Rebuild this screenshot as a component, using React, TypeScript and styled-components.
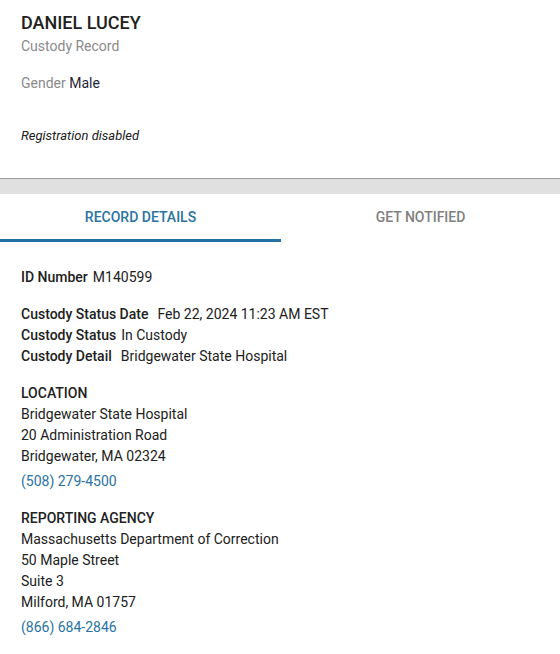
import React from "react";
import styled, { createGlobalStyle } from "styled-components";

const GlobalStyle = createGlobalStyle`
	body {
		margin: 0;
		font-family: Roboto, "Liberation Sans", Arial, sans-serif;
		background: #fff;
		color: #212121;
	}
`;

const Page = styled.div`
	width: 560px;
`;

const Header = styled.header`
	padding: 12px 21px 0 21px;
	height: 179px;
	box-sizing: border-box;
	border-bottom: 1px solid #9e9e9e;
`;

const Name = styled.h1`
	margin: 0;
	font-size: 18px;
	font-weight: 500;
	line-height: 22px;
	color: #212121;
`;

const Subtitle = styled.div`
	font-size: 14px;
	line-height: 20px;
	color: #8a8a8a;
	margin-top: 2px;
`;

const Field = styled.div`
	margin-top: 17px;
	font-size: 14px;
	line-height: 20px;
	color: #8a8a8a;
	span {
		color: #1f1f3a;
	}
`;

const Note = styled.div`
	margin-top: 35px;
	font-size: 13px;
	font-style: italic;
	color: #212121;
`;

const Divider = styled.div`
	height: 15px;
	background: #e0e0e0;
`;

const Tabs = styled.nav`
	display: grid;
	grid-template-columns: 281px 1fr;
	height: 48px;
`;

const Tab = styled.div<{ $active?: boolean }>`
	display: flex;
	align-items: center;
	justify-content: center;
	font-size: 14px;
	font-weight: 500;
	text-transform: uppercase;
	color: ${(p) => (p.$active ? "#2a73a3" : "#7f7f7f")};
	border-bottom: 3px solid ${(p) => (p.$active ? "#2271a0" : "transparent")};
	box-sizing: border-box;
	padding-top: 1px;
`;

const Body = styled.section`
	padding: 25px 21px 0 21px;
	font-size: 14px;
	line-height: 21px;
	color: #212121;
`;

const Group = styled.div`
	margin-bottom: 16px;
`;

const Row = styled.div`
	display: flex;
	gap: 5px;
`;

const Label = styled.span<{ $gap?: number }>`
	font-weight: 500;
	margin-right: ${(p) => p.$gap || 0}px;
`;

const SectionTitle = styled.div`
	font-weight: 500;
	text-transform: uppercase;
`;

const Phone = styled.div`
	color: #2a73a3;
	margin-top: 4px;
`;

export default function App() {
	return (
		<Page>
			<GlobalStyle />
			<Header>
				<Name>DANIEL LUCEY</Name>
				<Subtitle>Custody Record</Subtitle>
				<Field>
					Gender <span>Male</span>
				</Field>
				<Note>Registration disabled</Note>
			</Header>
			<Divider />
			<Tabs>
				<Tab $active>Record Details</Tab>
				<Tab>Get Notified</Tab>
			</Tabs>
			<Body>
				<Group>
					<Row>
						<Label>ID Number</Label>M140599
					</Row>
				</Group>
				<Group>
					<Row>
						<Label $gap={4}>Custody Status Date</Label>Feb 22, 2024 11:23 AM EST
					</Row>
					<Row>
						<Label>Custody Status</Label>In Custody
					</Row>
					<Row>
						<Label $gap={4}>Custody Detail</Label>Bridgewater State Hospital
					</Row>
				</Group>
				<Group>
					<SectionTitle>Location</SectionTitle>
					<div>Bridgewater State Hospital</div>
					<div>20 Administration Road</div>
					<div>Bridgewater, MA 02324</div>
					<Phone>(508) 279-4500</Phone>
				</Group>
				<Group>
					<SectionTitle>Reporting Agency</SectionTitle>
					<div>Massachusetts Department of Correction</div>
					<div>50 Maple Street</div>
					<div>Suite 3</div>
					<div>Milford, MA 01757</div>
					<Phone>(866) 684-2846</Phone>
				</Group>
			</Body>
		</Page>
	);
}
